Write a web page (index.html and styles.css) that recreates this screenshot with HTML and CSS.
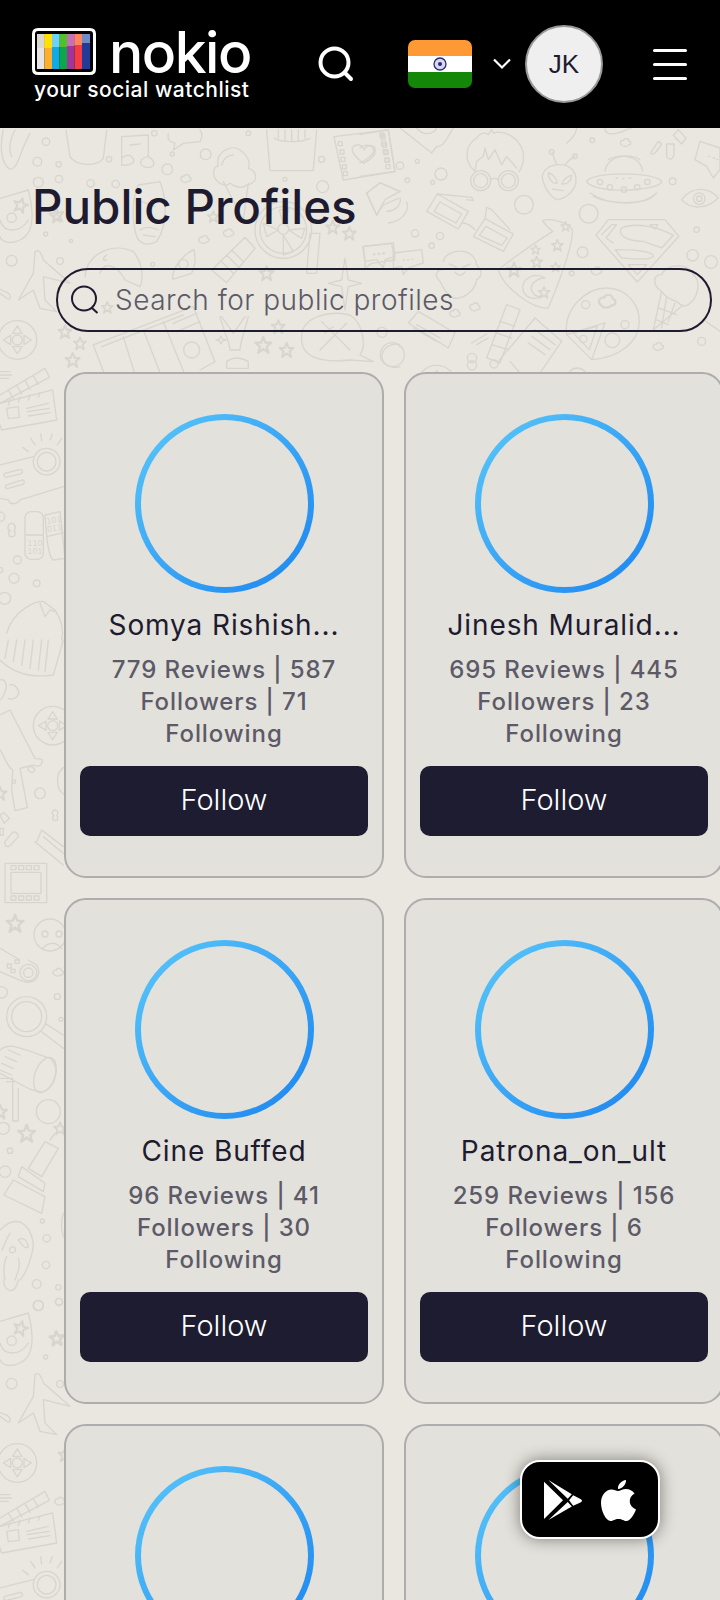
FILE: index.html
```html
<!DOCTYPE html>
<html lang="en">
<head>
  <meta charset="UTF-8">
  <meta name="viewport" content="width=device-width, initial-scale=1.0">
  <title>nokio - Public Profiles</title>
  <link rel="stylesheet" href="styles.css">
</head>
<body>
  <div class="navbar">
    <div class="brand">
      <div class="brand-top">
        <svg class="tv" width="64" height="47" viewBox="0 0 64 47">
          <path d="M6 1.500h52c3 0 4.500 1.500 4.500 4.500v35c0 3-1.500 4.500-4.500 4.500H6c-3 0-4.500-1.500-4.500-4.500V6c0-3 1.500-4.500 4.500-4.500z" fill="#000" stroke="#fff" stroke-width="3"/>
          <rect x="5" y="6" width="7.500" height="35" fill="#e6e6e6"/>
          <rect x="12.500" y="6" width="7.500" height="35" fill="#fdb02c"/>
          <rect x="20" y="6" width="7.500" height="35" fill="#11a9e6"/>
          <rect x="27.500" y="6" width="7.500" height="35" fill="#0aa84a"/>
          <rect x="35" y="6" width="7.500" height="35" fill="#a2359c"/>
          <rect x="42.500" y="6" width="7.500" height="35" fill="#f43c46"/>
          <rect x="50" y="6" width="8" height="35" fill="#233a97"/>
          <rect x="5" y="6" width="7.500" height="14" fill="#d9d9d0"/>
          <rect x="12.500" y="6" width="7.500" height="14" fill="#ffe000"/>
          <rect x="20" y="6" width="7.500" height="13" fill="#6fd0fa"/>
          <rect x="27.500" y="6" width="7.500" height="13" fill="#52bf2c"/>
          <rect x="35" y="6" width="7.500" height="12" fill="#c472b4"/>
          <rect x="42.500" y="6" width="7.500" height="11" fill="#ff8560"/>
          <rect x="50" y="6" width="8" height="9" fill="#6f8cc8"/>
        </svg>
        <span class="brand-name">nokio</span>
      </div>
      <div class="brand-tag">your social watchlist</div>
    </div>
    <svg class="nav-search" width="36" height="36" viewBox="0 0 36 36" fill="none" stroke="#fff" stroke-width="4" stroke-linecap="round">
      <circle cx="16.500" cy="16.500" r="14"/>
      <path d="M27 27l6 6"/>
    </svg>
    <div class="flag">
      <svg width="64" height="48" viewBox="0 0 64 48">
        <rect width="64" height="16" fill="#ff9933"/>
        <rect y="16" width="64" height="16" fill="#fff"/>
        <rect y="32" width="64" height="16" fill="#138808"/>
        <circle cx="32" cy="24" r="6" fill="#d8d8ec" stroke="#2a2a7c" stroke-width="1.300"/>
        <circle cx="32" cy="24" r="2" fill="#2a2a7c"/>
      </svg>
    </div>
    <svg class="chevron" width="18" height="12" viewBox="0 0 18 12" fill="none" stroke="#fff" stroke-width="2.200">
      <path d="M1 1.500l8 8 8-8"/>
    </svg>
    <div class="avatar">JK</div>
    <div class="burger"><span></span><span></span><span></span></div>
  </div>

  <div class="page">
    <svg class="doodles" width="720" height="1472" viewBox="0 128 720 1472" fill="none" stroke="#d8d5cd" stroke-width="4" stroke-linejoin="round" stroke-linecap="round">
      <defs>
        <path id="star" d="M0-14L4-4H14L6 3L9 14L0 7L-9 14L-6 3L-14-4H-4Z"/>
        <path id="cloud" d="M-12 6C-20 0-14-10-6-8C-4-16 10-14 10-6C18-4 16 8 8 6C4 12-8 12-12 6Z"/>
        <g id="dpad">
          <circle r="58"/><circle r="15"/>
          <path d="M0-42L14-20H-14ZM0 42L14 20H-14ZM-42 0L-20-14V14ZM42 0L20-14V14Z"/>
        </g>

        <g id="left-strip">
          <!-- clown mask, plane, dpad -->
          <path d="M0 205L85 180C100 240 105 310 60 330C30 345 5 335 0 320"/>
          <path d="M0 270C10 310 60 310 85 270"/>
          <circle cx="35" cy="263" r="14"/>
          <use href="#star" transform="translate(62 225) rotate(15) scale(1.500)"/>
          <use href="#star" transform="translate(170 255) rotate(-8) scale(1.500)"/>
          <circle cx="137" cy="312" r="6"/><circle cx="35" cy="392" r="16"/><circle cx="180" cy="393" r="10"/>
          <circle cx="115" cy="157" r="15"/><circle cx="177" cy="147" r="11"/>
          <path d="M105 365C115 355 125 370 130 390L210 460L130 440L135 510L170 545L120 535L100 480L55 510L100 430Z"/>
          <path d="M0 490L20 505C35 515 35 490 15 485L0 478"/>
          <use href="#dpad" transform="translate(52 630)"/>
          <use href="#star" transform="translate(195 605) scale(1.400)"/>
          <use href="#star" transform="translate(240 640) scale(1.300)"/>
          <use href="#star" transform="translate(218 690) scale(1.500)"/>
          <!-- clapper -->
          <path d="M0 725H30M0 735H35M0 745H25" />
          <path d="M0 795L135 715L148 742L0 820"/>
          <path d="M25 780L40 805M50 765L65 792M75 752L90 778M100 738L115 763"/>
          <path d="M0 820L158 780L170 870L5 900L0 885"/>
          <path d="M30 810L25 825M60 802L55 818M90 795L85 810M120 788L115 802"/>
          <path d="M20 835L55 830L58 862L25 866Z"/>
          <path d="M80 835L145 820M82 845L148 835M85 858L150 848"/>
          <!-- projector -->
          <circle cx="140" cy="995" r="40"/><circle cx="140" cy="995" r="28"/>
          <path d="M68 952L85 965M92 925L105 945M122 912L125 933M157 912L150 930M185 925L172 945"/>
          <path d="M0 1005L100 980M0 1105L25 1110C30 1125 50 1125 60 1110L190 1070"/>
          <path d="M15 1030L62 1018C70 1020 68 1030 62 1032L18 1042C10 1040 10 1032 15 1030Z"/>
          <path d="M20 1065L68 1050C75 1052 74 1062 68 1063L22 1076C15 1075 14 1067 20 1065Z"/>
        </g>
      </defs>

      <use href="#left-strip" transform="translate(0 130) scale(.3333)"/>
      <use href="#left-strip" transform="translate(0 1253) scale(.3333)"/>

      <!-- top left of the page -->
      <g transform="translate(0 130) scale(.3333)">
        <path d="M10 0C0 40 0 100 30 118C55 118 60 60 90 10M45 0C30 25 25 60 35 80"/>
        <path d="M198 0L210 80C230 110 290 110 310 85L320 0"/>
        <path d="M365 20L445 15V80C470 95 465 115 440 112C415 110 415 85 445 80M365 20V105C385 108 415 100 395 80C385 70 370 80 365 85M390 45L420 42"/>
        <path d="M505 10C500 40 520 35 525 40L520 60L550 40L600 35C610 20 605 5 600 0"/>
        <path d="M800 0L810 122L940 122L950 0M822 25C850 38 900 38 930 25M835 0V25M855 0V30M875 0V32M895 0V30M915 0V25"/>
        <path d="M1002 20L1165 0L1185 125L1030 150Z"/>
        <path d="M1015 35h12v12h-12zM1020 60h12v12h-12zM1023 82h12v12h-12zM1027 105h12v12h-12zM1030 125h12v12h-12zM1143 15h12v12h-12zM1148 40h12v12h-12zM1152 62h12v12h-12zM1156 85h12v12h-12z"/>
        <path d="M1090 100C1050 70 1050 50 1070 45C1085 42 1090 55 1092 60C1100 45 1120 42 1125 55C1130 75 1110 90 1090 100Z"/>
        <circle cx="138" cy="35" r="11"/><circle cx="112" cy="95" r="13"/><circle cx="176" cy="103" r="8"/><circle cx="327" cy="88" r="8"/>
        <circle cx="463" cy="10" r="8"/><circle cx="517" cy="72" r="6"/><circle cx="502" cy="118" r="16"/><circle cx="617" cy="73" r="16"/>
        <circle cx="745" cy="10" r="7"/><circle cx="965" cy="88" r="9"/><circle cx="272" cy="160" r="11"/><circle cx="347" cy="162" r="11"/>
        <circle cx="855" cy="148" r="6"/><circle cx="968" cy="170" r="18"/><circle cx="213" cy="333" r="5"/><circle cx="458" cy="403" r="6"/>
        <use href="#cloud" transform="translate(558 147)"/>
        <use href="#cloud" transform="translate(612 330)"/>
        <use href="#cloud" transform="translate(686 310)"/>
        <path d="M660 160C630 140 640 110 655 108C645 70 690 40 720 60C750 80 750 105 745 115C775 125 775 160 740 165C730 175 710 175 690 160C680 170 670 165 660 160ZM670 155L730 270L745 160M665 105C670 85 685 75 700 75"/>
        <path d="M1100 190L1140 158L1200 185M1100 190L1130 255L1150 225M1150 225L1195 205"/>
        <!-- iron man -->
        <path d="M415 165L480 155C505 220 500 290 470 335C440 350 420 340 410 320C395 270 395 210 415 165ZM425 215L465 230M420 300C435 290 455 290 475 300M430 315L465 320"/>
        <!-- film reel -->
        <circle cx="850" cy="300" r="85"/><circle cx="850" cy="300" r="70"/><circle cx="850" cy="297" r="16"/>
        <path d="M850 282L838 240L868 235ZM866 300L915 295L905 325ZM850 315L880 365L850 375ZM835 300L790 280L800 320Z"/>
        <path d="M930 310H960L950 430H920Z"/>
        <use href="#star" transform="translate(1048 310) scale(1.400)"/>
        <use href="#star" transform="translate(998 292) scale(1.400)"/>
        <use href="#star" transform="translate(170 262)"/>
        <use href="#star" transform="translate(640 260) scale(1.200)"/>
        <!-- horseshoe blob -->
        <path d="M255 440C260 370 340 335 400 365C430 400 430 450 420 470L375 450C350 400 310 395 300 430"/>
        <path d="M320 375C305 385 310 395 320 390"/>
        <!-- rocket, ticket -->
        <path d="M582 358C540 380 515 420 518 448L575 430C590 400 585 380 582 358Z"/>
        <circle cx="550" cy="402" r="14"/>
        <path d="M735 322L765 355L680 458L635 420ZM695 360L730 395M680 375L715 410M665 395L700 430"/>
        <use href="#star" transform="translate(800 430) scale(1.500)"/>
        <use href="#star" transform="translate(322 532) scale(1.200)"/>
        <path d="M1088 350L1175 340L1185 390L1115 400L1095 415V395Z"/>
        <path d="M1120 372h4M1135 370h4M1150 369h4"/>
        <path d="M1035 385L1045 450L1085 460L1045 470L1035 540L1025 470L985 460L1025 450Z"/>
        <!-- newspaper -->
        <path d="M280 645L580 530L645 695L600 720M305 650L550 555M280 645L320 750M370 620L410 750M430 600L485 740M490 575L555 735"/>
        <circle cx="575" cy="660" r="24"/>
        <path d="M520 580L590 550M530 605L600 575"/>
        <!-- statue -->
        <path d="M660 560C670 600 690 640 690 660H720C720 640 735 600 745 560M665 560L700 610L735 560M680 695C700 680 720 680 745 695V715H680Z"/>
        <use href="#star" transform="translate(790 645) scale(1.700)"/>
        <use href="#star" transform="translate(860 660) scale(1.500)"/>
        <use href="#star" transform="translate(835 590) scale(1.400)"/>
        <path d="M663 618L668 628L678 630L668 633L663 642L658 633L648 630L658 628Z"/>
        <!-- chat with cross -->
        <path d="M905 620C905 560 990 540 1050 555C1090 580 1100 650 1080 675L1120 695L1050 690C960 700 900 680 905 620Z"/>
        <path d="M965 575L1050 660M1040 580L960 660M975 610L1000 590"/>
        <path d="M1145 680C1150 640 1200 635 1200 650M1145 680C1150 710 1180 715 1200 710"/>
      </g>

      <!-- top right of the page -->
      <g transform="translate(360 128) scale(.3333)">
        <path d="M120 0L215 75L230 55C250 60 260 30 280 0"/>
        <path d="M170 0C190 25 220 20 230 0"/>
        <path d="M620 45C640 30 650 10 650 0"/>
        <path d="M735 0C735 20 760 25 800 5L815 0"/>
        <path d="M1020 40L1080 60V125L1060 150L1040 115L1005 95Z"/>
        <path d="M1045 85h4M1060 90h4M1070 95h4"/>
        <path d="M955 5L978 30L965 48L940 22ZM895 40L875 70C868 80 880 82 888 72L905 48ZM920 48H942V80C938 100 918 95 920 80Z"/>
        <!-- wizard glasses boy -->
        <path d="M345 130C310 100 315 50 350 30C365 10 380 15 385 20L395 5L400 15C430 5 470 25 485 60C495 85 490 110 478 130"/>
        <path d="M345 130L350 100L370 85L375 60L385 95L405 65L425 110L440 85L470 120"/>
        <circle cx="362" cy="158" r="30"/><circle cx="362" cy="158" r="21"/>
        <circle cx="445" cy="158" r="30"/><circle cx="445" cy="158" r="21"/>
        <path d="M392 155C400 150 408 150 415 155"/>
        <!-- alien -->
        <path d="M598 110C640 110 650 140 648 165C640 195 610 215 590 215C560 200 540 150 550 135C560 115 580 110 598 110Z"/>
        <path d="M565 135C575 135 590 150 592 165C580 170 565 155 565 135ZM635 142C625 142 610 155 605 168C620 170 635 160 635 142ZM578 183L610 188"/>
        <path d="M590 110C585 95 580 85 577 75M615 112C625 95 635 90 645 85"/>
        <circle cx="575" cy="72" r="7"/><circle cx="645" cy="85" r="7"/>
        <!-- ufo -->
        <path d="M680 160C700 130 880 130 905 160C900 190 700 200 680 160Z"/>
        <path d="M735 130C745 70 840 70 848 130M745 95C770 80 820 80 840 95M690 195C750 235 850 235 890 195M700 205C750 230 850 230 880 205"/>
        <circle cx="720" cy="162" r="8"/><circle cx="750" cy="178" r="8"/><circle cx="792" cy="185" r="8"/><circle cx="832" cy="178" r="8"/><circle cx="862" cy="162" r="8"/>
        <path d="M768 150h4M788 152h4M808 150h4"/>
        <!-- eye -->
        <path d="M965 215C1000 170 1050 180 1075 210C1040 245 990 245 965 215Z"/>
        <circle cx="1018" cy="212" r="17"/><circle cx="1018" cy="212" r="8"/>
        <!-- megaphone -->
        <path d="M20 195L60 165L120 190L75 215L50 262ZM80 250C110 250 125 225 120 210M85 285C125 280 150 250 140 222"/>
        <path d="M0 20L85 5L105 130L0 145"/>
        <path d="M60 15h12v12h-12zM65 40h12v12h-12zM70 65h12v12h-12zM75 90h12v12h-12zM78 110h12v12h-12z"/>
        <path d="M0 60C15 45 40 50 42 70C35 85 20 95 0 105"/>
        <!-- 3d glasses -->
        <path d="M200 250L232 198L325 250L295 303ZM222 250L240 222L305 258L288 285Z"/>
        <path d="M340 325L375 272L460 318L430 370ZM358 322L378 295L442 330L425 352Z"/>
        <path d="M305 285C325 285 335 295 345 305M232 198L335 208L340 218L320 215M375 272L380 238L395 245L450 305"/>
        <!-- hat -->
        <path d="M548 278C570 270 620 280 637 305C640 360 590 480 565 540C520 545 430 480 415 425C460 390 530 340 578 310C565 300 555 290 548 278Z"/>
        <path d="M555 450C520 430 480 455 490 490C500 515 530 515 545 505C520 510 505 480 520 465C530 455 545 450 555 450Z"/>
        <use href="#star" transform="translate(617 295)"/>
        <use href="#star" transform="translate(527 365)"/>
        <use href="#star" transform="translate(592 352) scale(1.200)"/>
        <use href="#star" transform="translate(530 402) scale(1.200)"/>
        <use href="#star" transform="translate(587 417)"/>
        <use href="#star" transform="translate(462 425) scale(1.500)"/>
        <use href="#star" transform="translate(552 493) scale(1.200)"/>
        <!-- shield -->
        <path d="M745 275H915L957 325L832 462L708 322Z"/>
        <path d="M725 320L755 290H770L738 330L760 345"/>
        <path d="M785 300C830 280 900 300 940 322L905 360L850 340C800 340 770 320 785 300Z"/>
        <path d="M765 365C820 365 880 370 880 385C870 400 800 390 785 390ZM805 410H860L832 440ZM870 290H893L885 303Z"/>
        <!-- ghost -->
        <path d="M250 400C255 365 340 350 350 410C365 430 370 440 350 455C345 490 310 515 280 510C260 500 250 480 240 460C220 440 230 425 250 425"/>
        <path d="M268 408L290 418M330 408L308 418M285 432C295 445 305 445 315 432"/>
        <!-- bubbles -->
        <path d="M10 355L100 345L105 385L75 395L70 420L50 395L15 400Z"/>
        <path d="M100 375L185 365L190 405L145 420L130 440L125 415L100 420Z"/>
        <path d="M42 380h3M55 378h3M68 377h3M130 396h3M143 395h3M156 394h3"/>
        <!-- pizza -->
        <path d="M620 620C610 540 680 480 740 480C800 480 840 530 838 585C835 640 780 690 695 695M620 620L735 585L695 695Z"/>
        <path d="M640 615L712 595L688 665Z"/>
        <circle cx="677" cy="530" r="12"/><circle cx="795" cy="590" r="12"/><circle cx="757" cy="637" r="22"/><circle cx="670" cy="633" r="11"/>
        <use href="#cloud" transform="translate(742 522) scale(1.600)"/>
        <!-- ice cream -->
        <path d="M905 490C875 470 880 440 905 440C915 410 985 400 1000 440C1025 460 1015 510 985 530C970 540 960 530 950 520C930 515 915 505 905 490Z"/>
        <path d="M905 490L880 605L965 535M895 540L950 560M888 575L925 590M920 505L905 600M945 525L925 580"/>
        <path d="M1030 575L1080 610"/>
        <!-- clapper -->
        <path d="M380 690L440 530L480 545L420 705Z"/>
        <path d="M395 650L445 665M408 615L455 630M420 580L465 595"/>
        <path d="M415 700L525 570L605 640L530 750M450 700L480 735"/>
        <path d="M525 605L585 650M515 625L570 665M505 645L555 680"/>
        <circle cx="402" cy="708" r="12"/>
        <path d="M335 645L380 618M350 650L385 630"/>
        <circle cx="336" cy="690" r="14"/><circle cx="336" cy="712" r="14"/>
        <path d="M145 585L175 550L285 615L265 660ZM170 590L240 630M160 600L230 640"/>
        <!-- circles -->
        <circle cx="243" cy="138" r="18"/><circle cx="120" cy="113" r="11"/><circle cx="172" cy="100" r="6"/><circle cx="142" cy="157" r="7"/><circle cx="218" cy="163" r="6"/>
        <circle cx="697" cy="37" r="7"/><circle cx="938" cy="160" r="10"/><circle cx="492" cy="230" r="28"/><circle cx="686" cy="257" r="28"/>
        <circle cx="165" cy="316" r="11"/><circle cx="240" cy="324" r="11"/><circle cx="215" cy="353" r="8"/><circle cx="668" cy="373" r="16"/>
        <circle cx="998" cy="382" r="17"/><circle cx="1053" cy="402" r="19"/><circle cx="1010" cy="305" r="8"/><circle cx="635" cy="436" r="7"/>
        <circle cx="66" cy="613" r="15"/><circle cx="97" cy="680" r="36"/><circle cx="1025" cy="640" r="12"/><circle cx="652" cy="750" r="30"/>
        <use href="#dpad" transform="translate(230 770)"/>
        <use href="#cloud" transform="translate(797 45)"/>
        <use href="#cloud" transform="translate(895 657)"/>
        <use href="#cloud" transform="translate(345 538)"/>
        <use href="#cloud" transform="translate(285 557)"/>
        <use href="#cloud" transform="translate(710 430)"/>
      </g>

      <!-- pills and helmet on the left edge -->
      <g transform="translate(0 340) scale(.3333)">
        <rect x="75" y="515" width="55" height="143" rx="18"/>
        <path d="M77 585H130M135 525L180 515L195 655L160 660C145 650 140 600 135 525ZM140 590L190 578"/>
        <text class="doodle-text" x="82" y="618">110</text>
        <text class="doodle-text" x="82" y="642">101</text>
        <text class="doodle-text" x="140" y="552" transform="rotate(-8 140 552)">101</text>
        <text class="doodle-text" x="142" y="576" transform="rotate(-8 142 576)">011</text>
        <path d="M36 550C21 550 21 570 31 572C21 577 26 592 36 590C48 590 48 575 41 572C49 567 46 550 36 550Z"/>
        <circle cx="52" cy="660" r="12"/><circle cx="42" cy="715" r="15"/><circle cx="14" cy="775" r="18"/><circle cx="110" cy="730" r="10"/><circle cx="0" cy="690" r="8"/><circle cx="0" cy="530" r="14"/>
        <path d="M20 880C40 810 110 780 130 785L165 810C190 850 190 880 185 900M120 790L135 830L150 810L165 815"/>
      </g>

      <!-- cleaver, film and face -->
      <g transform="translate(0 640) scale(.3333)">
        <path d="M0 60C40 100 90 115 160 105L190 0"/>
        <path d="M25 0L15 55M50 0L40 65M75 0L65 75M100 0L90 85M125 0L115 90M145 0L135 95"/>
        <path d="M0 120C15 115 25 135 15 155C10 170 5 178 0 180M30 135C45 130 60 150 55 165C45 180 30 178 25 175"/>
        <path d="M0 225L30 210L105 355L125 358C130 370 120 385 100 375L60 385L82 503L45 512L35 450L38 390C20 380 10 340 0 330"/>
        <circle cx="42" cy="425" r="5"/>
        <path d="M85 380C105 378 110 395 95 397C85 395 82 388 85 380"/>
        <use href="#dpad" transform="translate(158 257)"/>
        <circle cx="120" cy="460" r="16"/>
        <path d="M195 380C165 395 165 450 195 465"/>
        <path d="M165 510C155 510 155 525 162 527C155 532 158 542 165 542C175 542 175 530 170 527C176 522 174 510 165 510Z"/>
        <use href="#star" transform="translate(0 460) scale(1.400)"/>
        <path d="M0 525L12 518L28 535L12 550ZM0 565H10V585H0ZM35 580L15 605C10 618 25 625 32 615L55 590C55 578 42 572 35 580Z"/>
        <path d="M110 605L125 570L190 620M105 605L190 675M130 590L190 640"/>
        <rect x="15" y="670" width="125" height="118"/>
        <rect x="33" y="697" width="90" height="63"/>
        <path d="M33 677h15v12h-15zM56 677h15v12h-15zM79 677h15v12h-15zM102 677h15v12h-15zM33 768h15v12h-15zM56 768h15v12h-15zM79 768h15v12h-15zM102 768h15v12h-15z"/>
        <use href="#star" transform="translate(45 850) scale(1.800)"/>
        <circle cx="150" cy="885" r="48"/><circle cx="135" cy="882" r="9"/><circle cx="177" cy="882" r="9"/>
        <path d="M128 925C145 905 170 905 185 925"/>
        <path d="M0 925L60 960"/>
      </g>

      <!-- remote, spotlight and statue -->
      <g transform="translate(0 960) scale(.3333)">
        <path d="M0 35L70 65C110 75 125 40 110 15L85 0"/>
        <circle cx="85" cy="38" r="25"/><circle cx="85" cy="38" r="14"/>
        <path d="M22 12h12v12h-12zM45 0h12v10h-12zM33 28h12v10h-12z"/>
        <use href="#cloud" transform="translate(175 38)"/>
        <circle cx="172" cy="110" r="9"/><circle cx="183" cy="178" r="6"/><circle cx="5" cy="97" r="17"/>
        <circle cx="80" cy="170" r="60"/><circle cx="80" cy="170" r="45"/>
        <path d="M135 190L190 225M125 215L190 265"/>
        <path d="M0 270C30 245 60 265 150 295C180 320 170 380 130 395C100 400 60 370 0 340"/>
        <ellipse cx="135" cy="345" rx="30" ry="55" transform="rotate(20 135 345)"/>
        <path d="M25 270L60 285M15 290L50 305M5 310L40 325M0 330L35 345M20 365H45"/>
        <path d="M0 355H38V483H55V385"/>
        <use href="#star" transform="translate(0 455) scale(1.500)"/>
        <use href="#star" transform="translate(80 520) scale(1.800)"/>
        <use href="#star" transform="translate(180 505) scale(1.300)"/>
        <circle cx="145" cy="455" r="36"/><circle cx="10" cy="505" r="18"/>
        <circle cx="30" cy="572" r="8"/><circle cx="15" cy="635" r="17"/><circle cx="127" cy="783" r="6"/><circle cx="140" cy="835" r="11"/><circle cx="138" cy="915" r="11"/>
        <path d="M135 545L175 565L125 650L85 625ZM150 540L165 520"/>
        <path d="M65 620L135 670L130 695L55 650ZM40 660L135 710L125 760L12 705Z"/>
        <path d="M0 810C50 760 90 790 100 850C100 880 80 940 60 960M30 820C15 840 15 860 5 870M55 840C65 855 80 870 85 860C80 840 70 830 55 840M38 860C25 865 25 880 40 878C50 875 48 860 38 860M20 890C10 910 10 940 15 960M55 895C65 920 50 945 45 960"/>
        <path d="M190 760C180 790 185 810 190 830"/>
      </g>

      <!-- mask above the second clown -->
      <g transform="translate(0 1280) scale(.3333)">
        <path d="M10 0C15 40 45 45 55 0"/>
        <circle cx="110" cy="12" r="13"/><circle cx="175" cy="22" r="8"/><circle cx="115" cy="77" r="15"/><circle cx="177" cy="65" r="10"/>
        <use href="#cloud" transform="translate(180 665)"/>
        <use href="#star" transform="translate(170 175) scale(1.500)"/>
      </g>
    </svg>
    <h1 class="page-title">Public Profiles</h1>
    <div class="search-box">
      <svg width="30" height="30" viewBox="0 0 30 30" fill="none" stroke="#1e1b30" stroke-width="2">
        <circle cx="14" cy="13.500" r="12"/>
        <path d="M22 23l5.500 5"/>
      </svg>
      <input class="search-input" type="text" placeholder="Search for public profiles">
    </div>
    <div class="profile-grid">
      <div class="profile-card">
        <div class="ring"><div class="ring-inner"></div></div>
        <div class="profile-name">Somya Rishish...</div>
        <div class="profile-stats">779 Reviews | 587 Followers | 71 Following</div>
        <button class="follow-btn">Follow</button>
      </div>
      <div class="profile-card">
        <div class="ring"><div class="ring-inner"></div></div>
        <div class="profile-name">Jinesh Muralid...</div>
        <div class="profile-stats">695 Reviews | 445 Followers | 23 Following</div>
        <button class="follow-btn">Follow</button>
      </div>
      <div class="profile-card">
        <div class="ring"><div class="ring-inner"></div></div>
        <div class="profile-name">Cine Buffed</div>
        <div class="profile-stats">96 Reviews | 41 Followers | 30 Following</div>
        <button class="follow-btn">Follow</button>
      </div>
      <div class="profile-card">
        <div class="ring"><div class="ring-inner"></div></div>
        <div class="profile-name">Patrona_on_ult</div>
        <div class="profile-stats">259 Reviews | 156 Followers | 6 Following</div>
        <button class="follow-btn">Follow</button>
      </div>
      <div class="profile-card">
        <div class="ring"><div class="ring-inner"></div></div>
      </div>
      <div class="profile-card">
        <div class="ring"><div class="ring-inner"></div></div>
      </div>
    </div>
  </div>

  <div class="app-badge">
    <svg width="38" height="40" viewBox="0 0 112 118">
      <path d="M0 5V115L56 60ZM13 0L82 42L70 55ZM13 118L82 78L70 65ZM86 45L106 55C114 59 114 63 106 67L86 76L74 60Z" fill="#fff"/>
    </svg>
    <svg width="36" height="42" viewBox="0 0 36 42">
      <path d="M25 1c.3 4-3 8.500-8 9-.4-4.500 3.500-8.500 8-9zM17 12c2 0 4.500-2 8-2 3.500 0 6.500 1.500 8.500 4.500-7 4-6 13 1.500 16-2 5.500-6 11.500-9.500 11.500-3 0-4-2-8-2s-5 2-8 2C5 42 0 32 0 24c0-8 5-13.500 10.500-13.500 2.500 0 5 1.500 6.500 1.500z" fill="#fff"/>
    </svg>
  </div>
</body>
</html>
```

FILE: styles.css
```css
html, body {
  margin: 0;
  padding: 0;
  height: 1600px;
  overflow: hidden;
}
body {
  font-family: Inter, "Noto Sans", sans-serif;
  color: #1e1b30;
  background-color: #e9e7e0;
}
.navbar {
  height: 128px;
  background-color: #000;
  display: flex;
  align-items: center;
  position: relative;
}
.brand {
  margin-left: 32px;
  width: 224px;
  color: #fff;
}
.brand-top {
  display: flex;
  align-items: center;
  height: 48px;
}
.brand-name {
  font-family: Inter, sans-serif;
  font-size: 57px;
  font-weight: 500;
  line-height: 44px;
  letter-spacing: -1.500px;
  margin-left: 13px;
  padding-top: 4px;
}
.brand-tag {
  font-family: Inter, sans-serif;
  font-weight: 500;
  font-size: 21px;
  line-height: 22px;
  letter-spacing: 0.5px;
  margin: 4px 0 0 2px;
  white-space: nowrap;
}
.tv {
  flex: none;
}
.nav-search {
  margin-left: 62px;
  flex: none;
}
.flag {
  margin-left: 54px;
  width: 64px;
  height: 48px;
  border-radius: 7px;
  overflow: hidden;
  flex: none;
}
.flag svg {
  display: block;
}
.chevron {
  margin-left: 21px;
  flex: none;
}
.avatar {
  margin-left: 14px;
  width: 74px;
  height: 74px;
  border-radius: 50%;
  border: 2px solid #999;
  background-color: #efefef;
  color: #1e1b30;
  display: flex;
  align-items: center;
  justify-content: center;
  font-family: "Liberation Sans", Arial, sans-serif;
  font-size: 26px;
  flex: none;
}
.burger {
  margin-left: 50px;
  width: 34px;
  flex: none;
  display: flex;
  flex-direction: column;
  gap: 11px;
}
.burger span {
  display: block;
  height: 3px;
  border-radius: 2px;
  background-color: #fff;
}
.page {
  position: relative;
  height: 1472px;
  overflow: hidden;
}
.doodles {
  position: absolute;
  top: 0;
  left: 0;
}
.doodle-text {
  font-family: "DejaVu Sans", sans-serif;
  font-size: 24px;
  fill: #d8d5cd;
  stroke: none;
}
.page-title {
  position: relative;
  margin: 47px 0 0 32px;
  font-size: 47.500px;
  line-height: 64px;
  font-weight: 470;
}
.search-box {
  position: relative;
  margin: 29px 8px 0 56px;
  height: 60px;
  border: 2px solid #1e1b30;
  border-radius: 32px;
  display: flex;
  align-items: center;
  padding-left: 12px;
}
.search-box svg {
  flex: none;
}
.search-input {
  flex: 1;
  min-width: 0;
  margin-left: 15px;
  border: 0;
  padding: 0;
  background: transparent;
  font-family: Inter, sans-serif;
  font-size: 28px;
  font-weight: 300;
  letter-spacing: 0.5px;
}
.search-input::placeholder {
  color: #5c5a68;
  opacity: 1;
}
.profile-grid {
  position: relative;
  margin: 40px 0 0 64px;
  display: grid;
  grid-template-columns: 320px 320px;
  column-gap: 20px;
  row-gap: 20px;
}
.profile-card {
  box-sizing: border-box;
  height: 506px;
  padding: 40px 14px 0;
  background-color: #e3e1db;
  border: 2px solid #aeacac;
  border-radius: 22px;
  text-align: center;
}
.ring {
  width: 179px;
  height: 179px;
  margin: 0 auto;
  padding: 6px;
  box-sizing: border-box;
  border-radius: 50%;
  background: linear-gradient(135deg, #5ac8fa 0%, #1a84f0 100%);
}
.ring-inner {
  width: 100%;
  height: 100%;
  border-radius: 50%;
  background-color: #e3e1db;
}
.profile-name {
  margin-top: 12px;
  padding: 0 10px;
  font-size: 28px;
  font-weight: 430;
  line-height: 40px;
  letter-spacing: 0.9px;
  white-space: nowrap;
  overflow: hidden;
}
.profile-stats {
  margin-top: 9px;
  padding: 0 10px;
  font-size: 24px;
  font-weight: 450;
  line-height: 32px;
  letter-spacing: 0.9px;
  color: #5c5a68;
}
.follow-btn {
  display: block;
  width: 288px;
  height: 70px;
  margin-top: 16px;
  padding: 0 0 4px;
  border: 0;
  border-radius: 10px;
  background-color: #1e1c30;
  color: #fff;
  font-family: Inter, sans-serif;
  font-size: 29px;
  font-weight: 300;
}
.app-badge {
  position: fixed;
  left: 520px;
  top: 1460px;
  box-sizing: border-box;
  width: 140px;
  height: 79px;
  background-color: #000;
  border: 2px solid #fff;
  border-radius: 20px;
  box-shadow: 0 0 16px rgba(0, 0, 0, 0.45);
  display: flex;
  align-items: center;
  justify-content: center;
  gap: 19px;
}
```
